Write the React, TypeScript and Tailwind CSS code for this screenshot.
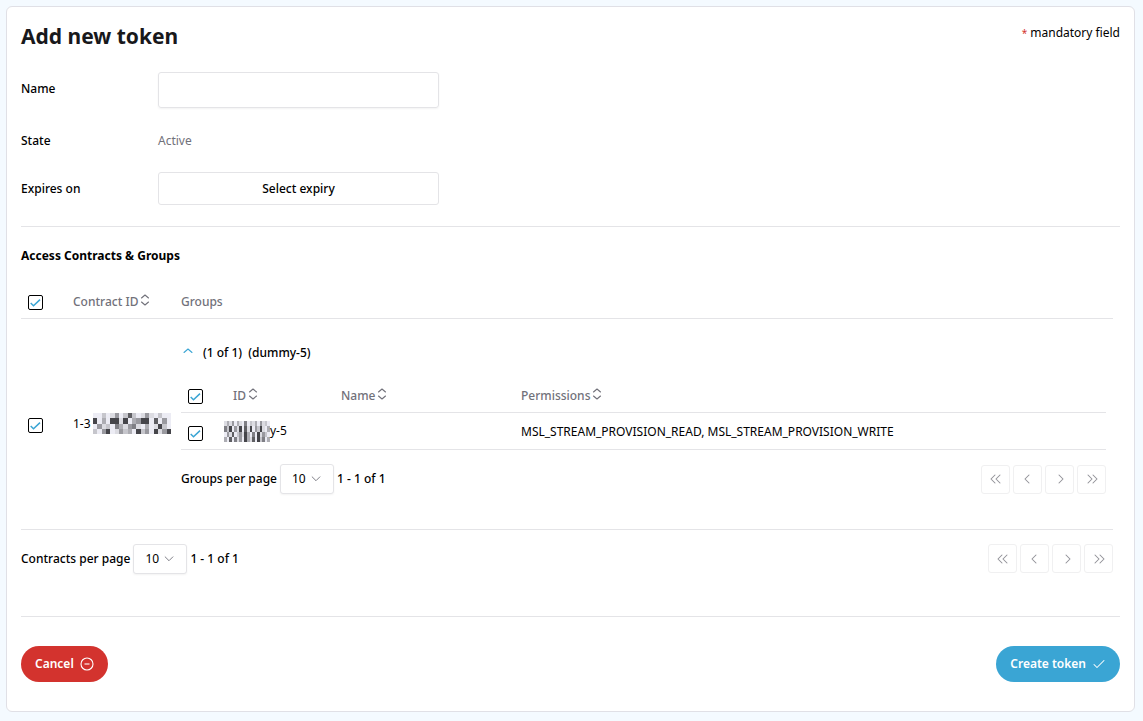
import React, { useState } from 'react';

const CONTRACT_MASK = [
  '113125137312521311',
  '814188281458817151',
  '152316425621412831',
  '315812534183518258',
];

const GROUP_MASK = [
  '242514216132415231',
  '638152817281538214',
  '152713528416182531',
  '417162518427183614',
];

const SHADES = ['#ffffff', '#ececf4', '#dcdce2', '#c6c6cc', '#adadb3', '#99999f', '#7f7f85', '#5f5f63', '#45454a'];

function Mosaic({ rows, className }: { rows: string[]; className: string }) {
  return (
    <svg
      className={className}
      viewBox={`0 0 ${rows[0].length} ${rows.length}`}
      preserveAspectRatio="none"
      shapeRendering="crispEdges"
      aria-hidden="true"
    >
      {rows.map((row, y) =>
        row.split('').map((shade, x) => (
          <rect key={`${x}-${y}`} x={x} y={y} width="1" height="1" fill={SHADES[Number(shade)]} />
        ))
      )}
    </svg>
  );
}

function Icon({ d, className = 'size-3.5' }: { d: string; className?: string }) {
  return (
    <svg className={className} viewBox="0 0 14 14" fill="none" stroke="currentColor" strokeWidth="1.05" strokeLinecap="round" strokeLinejoin="round" aria-hidden="true">
      <path d={d} />
    </svg>
  );
}

function Checkbox({ label, checked, onChange }: { label: string; checked: boolean; onChange: (v: boolean) => void }) {
  return (
    <span className="grid size-[15px]">
      <input
        type="checkbox"
        aria-label={label}
        checked={checked}
        onChange={(e) => onChange(e.target.checked)}
        className="peer col-start-1 row-start-1 size-[15px] appearance-none rounded-[2px] border border-black bg-white"
      />
      <svg className="pointer-events-none invisible col-start-1 row-start-1 size-[15px] text-[#3aa5d4] peer-checked:visible" viewBox="0 0 15 15" fill="none" stroke="currentColor" strokeWidth="1.5" aria-hidden="true">
        <path d="M2.7 8l2.8 2.7L12 4.6" />
      </svg>
    </span>
  );
}

function SortHeader({ label }: { label: string }) {
  return (
    <button type="button" className="flex items-center gap-0.5">
      {label}
      <svg className="-mt-1 h-3.5 w-2.5" viewBox="0 0 10 14" fill="none" stroke="currentColor" strokeWidth="1.1" strokeLinecap="round" strokeLinejoin="round" aria-hidden="true">
        <path d="M1.5 5L5 2l3.5 3M1.5 9L5 12l3.5-3" />
      </svg>
    </button>
  );
}

const PAGE_BUTTONS = [
  { label: 'First page', d: 'M6 3L2 7l4 4M11 3L7 7l4 4' },
  { label: 'Previous page', d: 'M8 3L4 7l4 4' },
  { label: 'Next page', d: 'M6 3l4 4-4 4' },
  { label: 'Last page', d: 'M3 3l4 4-4 4M8 3l4 4-4 4' },
];

function Paginator({ id, label }: { id: string; label: string }) {
  const [size, setSize] = useState('10');

  return (
    <div className="flex items-center justify-between">
      <div className="flex items-center gap-[3px] font-medium">
        <label htmlFor={id}>{label}</label>
        <span className="grid items-center">
          <select
            id={id}
            value={size}
            onChange={(e) => setSize(e.target.value)}
            className="col-start-1 row-start-1 h-[30px] w-[54px] appearance-none rounded-[3px] border border-[#e4e4e7] bg-white pl-[11px] font-normal shadow-xs"
          >
            <option>10</option>
            <option>25</option>
            <option>50</option>
          </select>
          <Icon className="pointer-events-none col-start-1 row-start-1 mr-3 size-3 justify-self-end text-[#71717a]" d="M2.5 4.5L7 9l4.5-4.5" />
        </span>
        <span>1 - 1 of 1</span>
      </div>
      <div className="flex gap-[3px]">
        {PAGE_BUTTONS.map(({ label, d }) => (
          <button key={label} type="button" aria-label={label} className="grid h-[29px] w-[29px] place-items-center rounded-[3px] border border-[#f0f0f1] text-[#8e8e95]">
            <Icon d={d} />
          </button>
        ))}
      </div>
    </div>
  );
}

export default function App() {
  const [name, setName] = useState('');
  const [open, setOpen] = useState(true);
  const [contract, setContract] = useState(true);
  const [group, setGroup] = useState(true);

  return (
    <div className="min-h-screen bg-[#f4faff] py-1.5 pr-2 pl-1.5 font-['Noto_Sans','Segoe_UI',sans-serif] text-xs text-black">
      <main className="rounded-md border border-[#e0e0e6] bg-white px-3.5 pt-3.5 pb-[29px]">
        <header className="flex items-start justify-between">
          <h1 className="text-[21px] leading-[30px] font-bold text-[#18181b]">Add new token</h1>
          <p className="mt-1 leading-4">
            <span className="text-[10px] text-[#d3332e]">*</span> mandatory field
          </p>
        </header>

        <form onSubmit={(e) => e.preventDefault()}>
          <div className="mt-[21px] grid grid-cols-[137px_281px] items-center">
            <label htmlFor="name" className="pb-0.5 font-medium">Name</label>
            <input
              id="name"
              value={name}
              onChange={(e) => setName(e.target.value)}
              className="h-9 rounded-[3px] border border-[#e4e4e7] px-3 shadow-xs outline-none"
            />
            <span className="flex h-16 items-center pt-0.5 font-medium">State</span>
            <span className="pt-0.5 text-[#71717a]">Active</span>
            <span id="expiry-label" className="font-medium">Expires on</span>
            <button type="button" aria-describedby="expiry-label" className="h-[33px] rounded-[3px] border border-[#e4e4e7] font-medium">
              Select expiry
            </button>
          </div>

          <section className="mt-[21px] border-y border-[#e4e4e7] pt-5 pb-[42px]">
            <h2 className="leading-[18px] font-bold">Access Contracts &amp; Groups</h2>
            <div className="mt-5 pr-[7px]">
              <table className="w-full border-collapse text-left">
                <thead className="text-[#71717a]">
                  <tr className="h-[33px] border-b border-[#e4e4e7]">
                    <th className="w-[52px] pt-0.5 pl-[7px]">
                      <Checkbox label="Select all contracts" checked={contract} onChange={setContract} />
                    </th>
                    <th className="w-[108px] pt-0.5 font-medium"><SortHeader label="Contract ID" /></th>
                    <th className="pt-0.5 font-medium">Groups</th>
                  </tr>
                </thead>
                <tbody>
                  <tr className="h-[211px] border-b border-[#e4e4e7]">
                    <td className="pt-1 pl-[7px]">
                      <Checkbox label="Select contract" checked={contract} onChange={setContract} />
                    </td>
                    <td>
                      <div className="flex items-center">
                        1-3
                        <Mosaic rows={CONTRACT_MASK} className="ml-0.5 h-[21px] w-[78px] shrink-0" />
                      </div>
                    </td>
                    <td className="pt-6 pr-[7px] align-top">
                      <button type="button" aria-expanded={open} onClick={() => setOpen(!open)} className="flex h-5 items-center gap-2 font-medium">
                        <Icon className="size-3.5 text-[#3aa5d4]" d="M3 6.5L7 3l4 3.5" />
                        <span>(1 of 1)&nbsp; (dummy-5)</span>
                      </button>
                      {open && (
                        <>
                          <table className="mt-3.5 mb-3.5 w-full border-collapse text-left">
                            <thead className="text-[#71717a]">
                              <tr className="h-9 border-b border-[#e4e4e7]">
                                <th className="w-[43px] pt-1 pl-[7px]">
                                  <Checkbox label="Select all groups" checked={group} onChange={setGroup} />
                                </th>
                                <th className="w-[117px] pt-1 pl-[9px] font-medium"><SortHeader label="ID" /></th>
                                <th className="w-[180px] pt-1 font-medium"><SortHeader label="Name" /></th>
                                <th className="pt-1 font-medium"><SortHeader label="Permissions" /></th>
                              </tr>
                            </thead>
                            <tbody>
                              <tr className="h-[37px] border-b border-[#e4e4e7]">
                                <td className="pt-1 pl-[7px]">
                                  <Checkbox label="Select group" checked={group} onChange={setGroup} />
                                </td>
                                <td>
                                  <div className="flex items-center">
                                    <Mosaic rows={GROUP_MASK} className="h-[21px] w-[46px]" />
                                    y-5
                                  </div>
                                </td>
                                <td></td>
                                <td className="pt-0.5">MSL_STREAM_PROVISION_READ, MSL_STREAM_PROVISION_WRITE</td>
                              </tr>
                            </tbody>
                          </table>
                          <Paginator id="groups-size" label="Groups per page" />
                        </>
                      )}
                    </td>
                  </tr>
                </tbody>
              </table>
              <div className="pt-3.5">
                <Paginator id="contracts-size" label="Contracts per page" />
              </div>
            </div>
          </section>

          <footer className="mt-[29px] flex justify-between font-semibold text-white">
            <button type="button" className="flex h-9 items-center gap-1.5 rounded-full bg-[#d3332e] px-3.5">
              Cancel
              <svg className="size-3.5" viewBox="0 0 14 14" fill="none" stroke="currentColor" strokeWidth="1.1" aria-hidden="true">
                <circle cx="7" cy="7" r="6" />
                <path d="M4.5 7h5" />
              </svg>
            </button>
            <button type="submit" className="flex h-9 items-center gap-1.5 rounded-full bg-[#3aa5d4] px-3.5">
              Create token
              <Icon d="M2 7.5l3 3 7-7" />
            </button>
          </footer>
        </form>
      </main>
    </div>
  );
}
